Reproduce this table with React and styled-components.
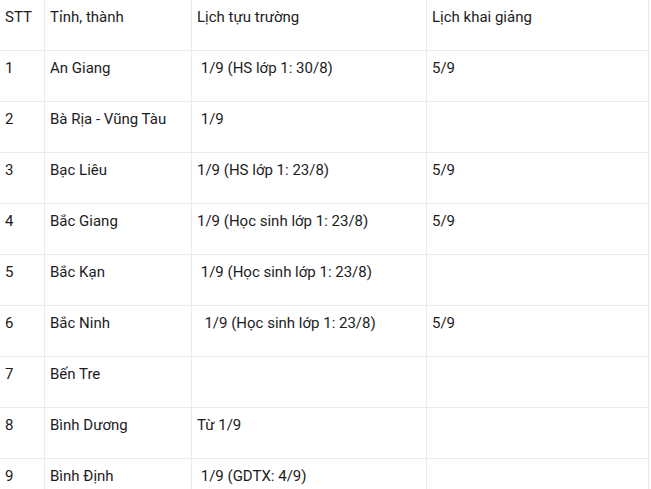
import React from 'react';
import styled, { createGlobalStyle } from 'styled-components';

const GlobalStyle = createGlobalStyle`
    html, body {
        margin: 0;
        padding: 0;
        background: #ffffff;
    }
    body {
        font-family: Roboto, "Noto Sans", "Liberation Sans", sans-serif;
        color: #1c1c1e;
    }
`;

const rows = [
    ['1', 'An Giang', ' 1/9 (HS lớp 1: 30/8)', '5/9'],
    ['2', 'Bà Rịa - Vũng Tàu', ' 1/9', ''],
    ['3', 'Bạc Liêu', '1/9 (HS lớp 1: 23/8)', '5/9'],
    ['4', 'Bắc Giang', '1/9 (Học sinh lớp 1: 23/8)', '5/9'],
    ['5', 'Bắc Kạn', ' 1/9 (Học sinh lớp 1: 23/8)', ''],
    ['6', 'Bắc Ninh', '  1/9 (Học sinh lớp 1: 23/8)', '5/9'],
    ['7', 'Bến Tre', '', ''],
    ['8', 'Bình Dương', 'Từ 1/9', ''],
    ['9', 'Bình Định', ' 1/9 (GDTX: 4/9)', ''],
];

const Table = styled.div`
    display: grid;
    grid-template-columns: 45px 147px 235px 222px;
    width: 649px;
`;

const Cell = styled.div`
    box-sizing: border-box;
    height: 51px;
    padding: 7px 5px 0 5px;
    border-right: 1px solid #ebebeb;
    border-bottom: 1px solid #ebebeb;
    font-size: 15px;
    line-height: 20px;
    white-space: pre;
    overflow: hidden;
`;

const App = () => {
    const header = ['STT', 'Tỉnh, thành', 'Lịch tựu trường', 'Lịch khai giảng'];

    return (
        <>
            <GlobalStyle />
            <Table>
                {header.map((h) => (
                    <Cell key={h}>{h}</Cell>
                ))}
                {rows.map((row) =>
                    row.map((val, i) => (
                        <Cell key={row[0] + '-' + i}>{val}</Cell>
                    ))
                )}
            </Table>
        </>
    );
};

export default App;
